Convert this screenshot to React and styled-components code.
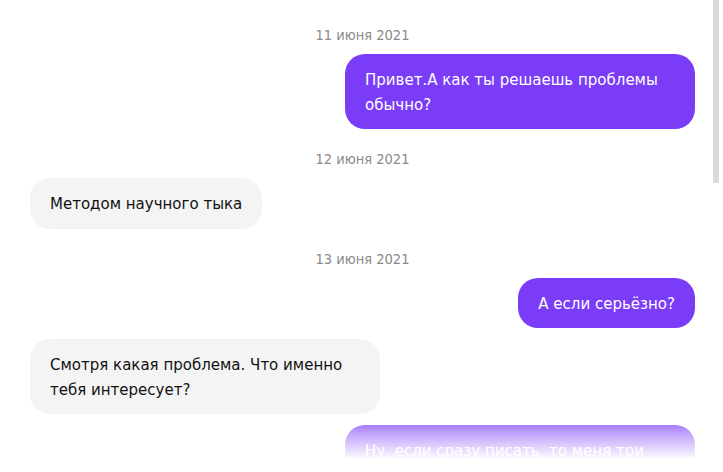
import React from 'react';
import styled, { createGlobalStyle } from 'styled-components'

const GlobalStyle = createGlobalStyle`
  body {
    margin: 0;
    background: #ffffff;
    font-family: "DejaVu Sans Condensed", "DejaVu Sans", sans-serif;
  }
`

const ChatWindow = styled.div`
  position: relative;
  height: 472px;
  overflow: hidden;
`

const ScrollArea = styled.div`
  height: 100%;
  overflow-y: auto;
  scrollbar-width: none;

  &::-webkit-scrollbar {
    display: none;
  }
`

const ScrollThumb = styled.div`
  position: absolute;
  top: 0;
  right: 4px;
  width: 6px;
  height: 183px;
  background: #dadada;
`

const MessageList = styled.div`
  display: flex;
  flex-direction: column;
  gap: 11px;
  padding: 27px 28px 60px 30px;
`

const DateLabel = styled.div`
  align-self: center;
  font-size: 14.5px;
  line-height: 16px;
  color: #8a8a8a;
  margin-top: ${props => props.first ? '0' : '11px'};
`

const Bubble = styled.div`
  align-self: ${props => props.mine ? 'flex-end' : 'flex-start'};
  max-width: 350px;
  box-sizing: border-box;
  padding: 13px 20px;
  border-radius: 20px;
  font-size: 16.7px;
  line-height: 24.5px;
  background: ${props => props.mine ? '#7a3cf7' : '#f4f4f4'};
  color: ${props => props.mine ? '#ffffff' : '#111111'};
`

const BottomFade = styled.div`
  position: absolute;
  left: 0;
  right: 10px;
  bottom: 0;
  height: 62px;
  pointer-events: none;
  background: linear-gradient(to bottom, rgba(255, 255, 255, 0) 0%, rgba(255, 255, 255, 0.55) 40%, #ffffff 80%);
`

const feed = [
  { date: '11 июня 2021' },
  { mine: true, text: 'Привет.А как ты решаешь проблемы обычно?' },
  { date: '12 июня 2021' },
  { mine: false, text: 'Методом научного тыка' },
  { date: '13 июня 2021' },
  { mine: true, text: 'А если серьёзно?' },
  { mine: false, text: 'Смотря какая проблема. Что именно тебя интересует?' },
  { mine: true, text: 'Ну, если сразу писать, то меня три раза отругают, а потом всё равно заставят переделывать.' },
  { mine: false, text: 'Тогда сначала разберись, что от тебя хотят.' },
  { date: '14 июня 2021' },
  { mine: true, text: 'Попробую так и сделать' },
  { mine: false, text: 'Если что, пиши — помогу чем смогу.' },
  { mine: true, text: 'Спасибо!' },
  { date: '15 июня 2021' },
  { mine: false, text: 'Ну как, получилось?' },
  { mine: true, text: 'Да, вроде всё работает. Осталось только проверить ещё раз перед отправкой.' },
  { mine: false, text: 'Отлично, удачи!' },
  { mine: true, text: 'Спасибо, буду держать в курсе' },
]

class App extends React.Component {
  render() {
    let firstDate = true
    return (
      <ChatWindow>
        <GlobalStyle />
        <ScrollArea>
          <MessageList>
            {feed.map((item, index) => {
              if (item.date) {
                const first = firstDate
                firstDate = false
                return <DateLabel key={index} first={first}>{item.date}</DateLabel>
              }
              return <Bubble key={index} mine={item.mine}>{item.text}</Bubble>
            })}
          </MessageList>
        </ScrollArea>
        <BottomFade />
        <ScrollThumb />
      </ChatWindow>
    );
  }
}

export default App;
